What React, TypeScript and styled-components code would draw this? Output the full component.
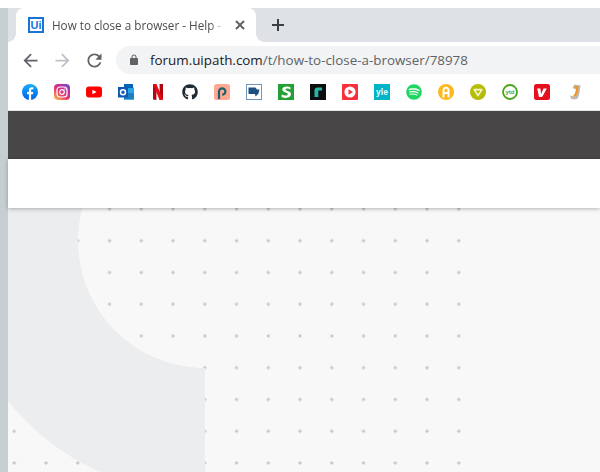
import React from "react";
import styled, { createGlobalStyle } from "styled-components";
import { FaGithub, FaSpotify } from "react-icons/fa";

const GlobalStyle = createGlobalStyle`
  html, body {
    margin: 0;
    padding: 0;
    background: #fff;
  }
`;

const Page = styled.div`
  width: 600px;
  height: 472px;
  padding-top: 8px;
  box-sizing: border-box;
  display: flex;
  overflow: hidden;
  background: #fff;
`;

const Gutter = styled.div`
  flex: 0 0 8px;
  background: #c5ced1;
`;

const Browser = styled.div`
  flex: 1;
  min-width: 0;
  display: flex;
  flex-direction: column;
  font-family: "Open Sans", "Noto Sans", sans-serif;
`;

const TabStrip = styled.div`
  height: 34px;
  flex: none;
  display: flex;
  align-items: center;
  padding-left: 8px;
  background: #dee1e6;
`;

const Tab = styled.div`
  position: relative;
  width: 240px;
  height: 34px;
  box-sizing: border-box;
  padding: 0 8px 0 12px;
  display: flex;
  align-items: center;
  gap: 8px;
  background: #fff;
  border-radius: 8px 8px 0 0;

  &::before,
  &::after {
    content: "";
    position: absolute;
    bottom: 0;
    width: 8px;
    height: 8px;
  }
  &::before {
    left: -8px;
    background: radial-gradient(circle at 0 0, #dee1e6 7.5px, #fff 8px);
  }
  &::after {
    right: -8px;
    background: radial-gradient(circle at 100% 0, #dee1e6 7.5px, #fff 8px);
  }
`;

const TabTitle = styled.span`
  flex: 1;
  min-width: 0;
  overflow: hidden;
  white-space: nowrap;
  font-size: 11.7px;
  color: #4a4c50;
  -webkit-mask-image: linear-gradient(90deg, #000 92%, transparent 100%);
  mask-image: linear-gradient(90deg, #000 92%, transparent 100%);
`;

const NewTab = styled.div`
  width: 28px;
  height: 28px;
  margin-left: 8px;
  display: flex;
  align-items: center;
  justify-content: center;
`;

const Toolbar = styled.div`
  height: 36px;
  flex: none;
  box-sizing: border-box;
  padding: 4px 0 4px 6px;
  display: flex;
  align-items: center;
  background: #fff;
`;

const NavButton = styled.div`
  flex: 0 0 32px;
  height: 28px;
  display: flex;
  align-items: center;
  justify-content: center;
`;

const UrlBar = styled.div`
  flex: 1;
  height: 28px;
  margin-left: 6px;
  padding-left: 12px;
  display: flex;
  align-items: center;
  gap: 10px;
  background: #f1f3f4;
  border-radius: 14px 0 0 14px;
`;

const UrlText = styled.span`
  font-size: 13.4px;
  white-space: nowrap;
  color: #5f6368;
`;

const UrlHost = styled.span`
  color: #202124;
`;

const BookmarkBar = styled.div`
  height: 33px;
  flex: none;
  box-sizing: border-box;
  padding: 6px 0 0 14px;
  display: flex;
  align-items: flex-start;
  gap: 16px;
  background: #fff;
  border-bottom: 1px solid #e3e3e3;
`;

const Favicon = styled.span`
  flex: 0 0 16px;
  width: 16px;
  height: 16px;
  display: block;

  svg {
    display: block;
  }
`;

const SiteBand = styled.div`
  height: 48px;
  flex: none;
  background: #484646;
`;

const SiteNav = styled.div`
  position: relative;
  z-index: 1;
  height: 49px;
  flex: none;
  background: #fff;
  box-shadow: 0 1px 4px rgba(0, 0, 0, 0.28);
`;

// ring quarter on top, dot grid in the middle (stops at the content box edge), flat fill last
const Hero = styled.div`
  flex: 1;
  min-height: 0;
  box-sizing: border-box;
  padding-right: 138px;
  background-image:
    radial-gradient(
      circle at 197px 33px,
      transparent 126.6px,
      #ecedef 127.2px,
      #ecedef 253.6px,
      transparent 254.2px
    ),
    radial-gradient(circle, #c6c6c6 1.1px, transparent 2px),
    linear-gradient(#f8f8f8, #f8f8f8);
  background-size: 197px 100%, 31.75px 31.75px, 100% 100%;
  background-position: 0 0, -9.6px -14.9px, 0 0;
  background-repeat: no-repeat, repeat, no-repeat;
  background-clip: border-box, content-box, border-box;
`;

const Glyph = styled.text<{ $size: number }>`
  font-family: "Liberation Sans", sans-serif;
  font-size: ${({ $size }) => $size}px;
  font-weight: 700;
  text-anchor: middle;
`;

const Icon16: React.FC<{ children: React.ReactNode }> = ({ children }) => (
  <Favicon>
    <svg width="16" height="16" viewBox="0 0 16 16">
      {children}
    </svg>
  </Favicon>
);

const bookmarks: React.ReactNode[] = [
  // facebook
  <Icon16 key="fb">
    <defs>
      <linearGradient id="fbg" x1="0" y1="0" x2="0" y2="1">
        <stop offset="0" stopColor="#18acfe" />
        <stop offset="1" stopColor="#0163e0" />
      </linearGradient>
    </defs>
    <circle cx="8" cy="8" r="8" fill="url(#fbg)" />
    <path d="M6.9 16V10.3H5V8h1.9V6.3C6.9 4.3 8 3.2 9.8 3.2c.7 0 1.3.1 1.6.1v2h-1.1c-.9 0-1.2.6-1.2 1.2V8h2.2l-.4 2.3H9.1V16z" fill="#fff" />
  </Icon16>,
  // instagram
  <Icon16 key="ig">
    <defs>
      <linearGradient id="igg" x1="0.1" y1="1" x2="0.9" y2="0">
        <stop offset="0" stopColor="#fdc04e" />
        <stop offset="0.4" stopColor="#e8386b" />
        <stop offset="0.75" stopColor="#b52fa8" />
        <stop offset="1" stopColor="#5a56cf" />
      </linearGradient>
    </defs>
    <rect width="16" height="16" rx="4" fill="url(#igg)" />
    <rect x="3" y="3" width="10" height="10" rx="3" fill="none" stroke="#fff" strokeWidth="1.2" />
    <circle cx="8" cy="8" r="2.3" fill="none" stroke="#fff" strokeWidth="1.2" />
    <circle cx="11" cy="5" r="0.7" fill="#fff" />
  </Icon16>,
  // youtube
  <Icon16 key="yt">
    <rect x="0" y="2.5" width="16" height="11" rx="3" fill="#f00" />
    <path d="M6.4 5.7 10.6 8l-4.2 2.3z" fill="#fff" />
  </Icon16>,
  // outlook
  <Icon16 key="ol">
    <path d="M6 0h9v3l1 1v11.5H6z" fill="#28a8ea" />
    <path d="M6 0h9v4H6z" fill="#0364b8" />
    <path d="M6 9h10v6.5H6z" fill="#1a7fc4" />
    <rect x="0" y="3" width="10" height="10.5" fill="#0f5ab0" />
    <circle cx="5" cy="8.2" r="2.5" fill="none" stroke="#fff" strokeWidth="1.5" />
  </Icon16>,
  // netflix
  <Icon16 key="nf">
    <path d="M3 0h3.4v16L3 15.6z" fill="#b1060f" />
    <path d="M9.6 0H13v15.6l-3.4.4z" fill="#b1060f" />
    <path d="M3 0h3.4L13 15.6 9.6 16z" fill="#e50914" />
  </Icon16>,
  // github
  <Favicon key="gh">
    <FaGithub size={16} color="#1f2b33" />
  </Favicon>,
  // p
  <Icon16 key="pp">
    <rect width="16" height="16" rx="2.5" fill="#ffa993" />
    <path d="M5 15V7.5a3.2 3.2 0 1 1 3.2 3.2" fill="none" stroke="#1f5f6b" strokeWidth="2.2" />
  </Icon16>,
  // blue framed note
  <Icon16 key="fr">
    <rect x="0.5" y="0.5" width="15" height="15" fill="#fff" stroke="#6e95bb" />
    <path d="M2.5 3.5h7l1.5 2h2.5l-1 4-3 3-.5-2.5H2.5z" fill="#1d5282" />
  </Icon16>,
  // S
  <Icon16 key="ss">
    <rect width="16" height="16" fill="#25a035" />
    <path d="M12.5 3.4C11 2.4 8 1.9 6 3c-2.6 1.4-2 4 .4 5 1.6.7 3.6 1 3.4 2.4-.2 1.6-3.6 1.3-6.2.2v2.4c2.4 1.1 6 1.3 8-.2 2.2-1.6 1.8-4.2-.6-5.2C9.2 6.9 7.2 6.5 7.6 5.3c.4-1.2 2.9-.9 4.9.3z" fill="#fff" />
  </Icon16>,
  // r
  <Icon16 key="rr">
    <rect width="16" height="16" fill="#0c0f0f" />
    <path d="M4.5 13V6.5C4.5 4.8 5.6 3.5 7.5 3.5H12v3H8.3V13z" fill="#27b6a6" />
  </Icon16>,
  // play
  <Icon16 key="pl">
    <rect width="16" height="16" rx="1" fill="#f9303b" />
    <circle cx="8" cy="8" r="5.6" fill="#fff" />
    <path d="M6.5 5.2 11 8l-4.5 2.8z" fill="#f9303b" />
  </Icon16>,
  // yle
  <Icon16 key="yl">
    <rect width="16" height="16" fill="#00b4c8" />
    <Glyph x="8" y="11" $size={8.5} fill="#e8fbfd">yle</Glyph>
  </Icon16>,
  // spotify
  <Favicon key="sp">
    <FaSpotify size={16} color="#1ed760" />
  </Favicon>,
  // yellow A
  <Icon16 key="ya">
    <circle cx="8" cy="8" r="8" fill="#ffb81c" />
    <path d="M4.5 13.5V6.4C4.5 4.3 6 2.8 8 2.8s3.5 1.5 3.5 3.6v7.100H9.500V10h-3v3.500zM6.500 8h3V6.400C9.500 5.500 8.900 4.800 8 4.800s-1.500.7-1.500 1.600z" fill="#fff" />
  </Icon16>,
  // olive ring
  <Icon16 key="ol2">
    <circle cx="8" cy="8" r="8" fill="#b6bd06" />
    <path d="M4.2 5.6h7.600L8 11.6z" fill="#b6bd06" stroke="#f4f5d2" strokeWidth="1.700" strokeLinejoin="round" />
  </Icon16>,
  // green ring
  <Icon16 key="vi">
    <circle cx="8" cy="8" r="7" fill="#fff" stroke="#4aa616" strokeWidth="1.8" />
    <Glyph x="8" y="10" $size={6} fill="#4aa616">ytd</Glyph>
  </Icon16>,
  // red V
  <Icon16 key="vr">
    <rect width="16" height="16" rx="2.5" fill="#e50f1e" />
    <path d="M3.2 4.5h3.2l.7 5.4 2.4-5.4h3.3L8.2 13H5z" fill="#fff" />
  </Icon16>,
  // orange figure
  <Icon16 key="jj">
    <path d="M8.5 0.5c2 .5 4 1 6 .8-.6 4.600-1 9.700-2.800 13-1.400 1.200-5 1.400-6.500.4L4 11.500l3.500 1C9.500 10.500 10.500 7 10 5L6.500 4.300c.6-1 1.400-2.800 2-3.800z" fill="#bdb7ad" />
    <path d="M7.500 2.500 12.300 2.200c.2 3-.8 7.200-2.400 9.800-1 .5-2 .5-2.800 0 1.800-2 2.900-4.500 2.700-7.300z" fill="#f5941c" />
  </Icon16>,
];

export default function App() {
  return (
    <>
      <GlobalStyle />
      <Page>
        <Gutter />
        <Browser>
          <TabStrip>
            <Tab>
              <Favicon>
                <svg width="16" height="16" viewBox="0 0 16 16">
                  <rect width="16" height="16" fill="#1a73d9" />
                  <rect x="2" y="2" width="12" height="12" fill="#fff" />
                  <Glyph x="8" y="12.4" $size={11} fill="#1a73d9">Ui</Glyph>
                </svg>
              </Favicon>
              <TabTitle>How to close a browser - Help - UiPath Community Forum</TabTitle>
              <svg width="16" height="16" viewBox="0 0 16 16">
                <path d="M4 4l8 8M12 4l-8 8" stroke="#5f6368" strokeWidth="2" fill="none" />
              </svg>
            </Tab>
            <NewTab>
              <svg width="14" height="14" viewBox="0 0 14 14">
                <path d="M7 1v12M1 7h12" stroke="#3c4043" strokeWidth="2" fill="none" />
              </svg>
            </NewTab>
          </TabStrip>
          <Toolbar>
            <NavButton>
              <svg width="21" height="21" viewBox="0 0 24 24" fill="#5f6368">
                <path d="M20 11H7.83l5.59-5.59L12 4l-8 8 8 8 1.41-1.41L7.83 13H20v-2z" />
              </svg>
            </NavButton>
            <NavButton>
              <svg width="21" height="21" viewBox="0 0 24 24" fill="#bdc1c6">
                <path d="M12 4l-1.41 1.41L16.17 11H4v2h12.17l-5.58 5.59L12 20l8-8z" />
              </svg>
            </NavButton>
            <NavButton>
              <svg width="21" height="21" viewBox="0 0 24 24" fill="#5f6368">
                <path d="M17.65 6.35C16.2 4.9 14.21 4 12 4c-4.42 0-7.99 3.58-7.99 8s3.57 8 7.99 8c3.73 0 6.84-2.55 7.73-6h-2.08c-.82 2.33-3.04 4-5.65 4-3.31 0-6-2.69-6-6s2.69-6 6-6c1.66 0 3.14.69 4.22 1.78L13 11h7V4l-2.35 2.35z" />
              </svg>
            </NavButton>
            <UrlBar>
              <svg width="12" height="12" viewBox="0 0 24 24" fill="#5f6368">
                <path d="M18 8h-1V6c0-2.76-2.24-5-5-5S7 3.24 7 6v2H6c-1.1 0-2 .9-2 2v10c0 1.1.9 2 2 2h12c1.1 0 2-.9 2-2V10c0-1.1-.9-2-2-2zM9 6c0-1.66 1.34-3 3-3s3 1.34 3 3v2H9V6z" />
              </svg>
              <UrlText>
                <UrlHost>forum.uipath.com</UrlHost>/t/how-to-close-a-browser/78978
              </UrlText>
            </UrlBar>
          </Toolbar>
          <BookmarkBar>{bookmarks}</BookmarkBar>
          <SiteBand />
          <SiteNav />
          <Hero />
        </Browser>
      </Page>
    </>
  );
}
